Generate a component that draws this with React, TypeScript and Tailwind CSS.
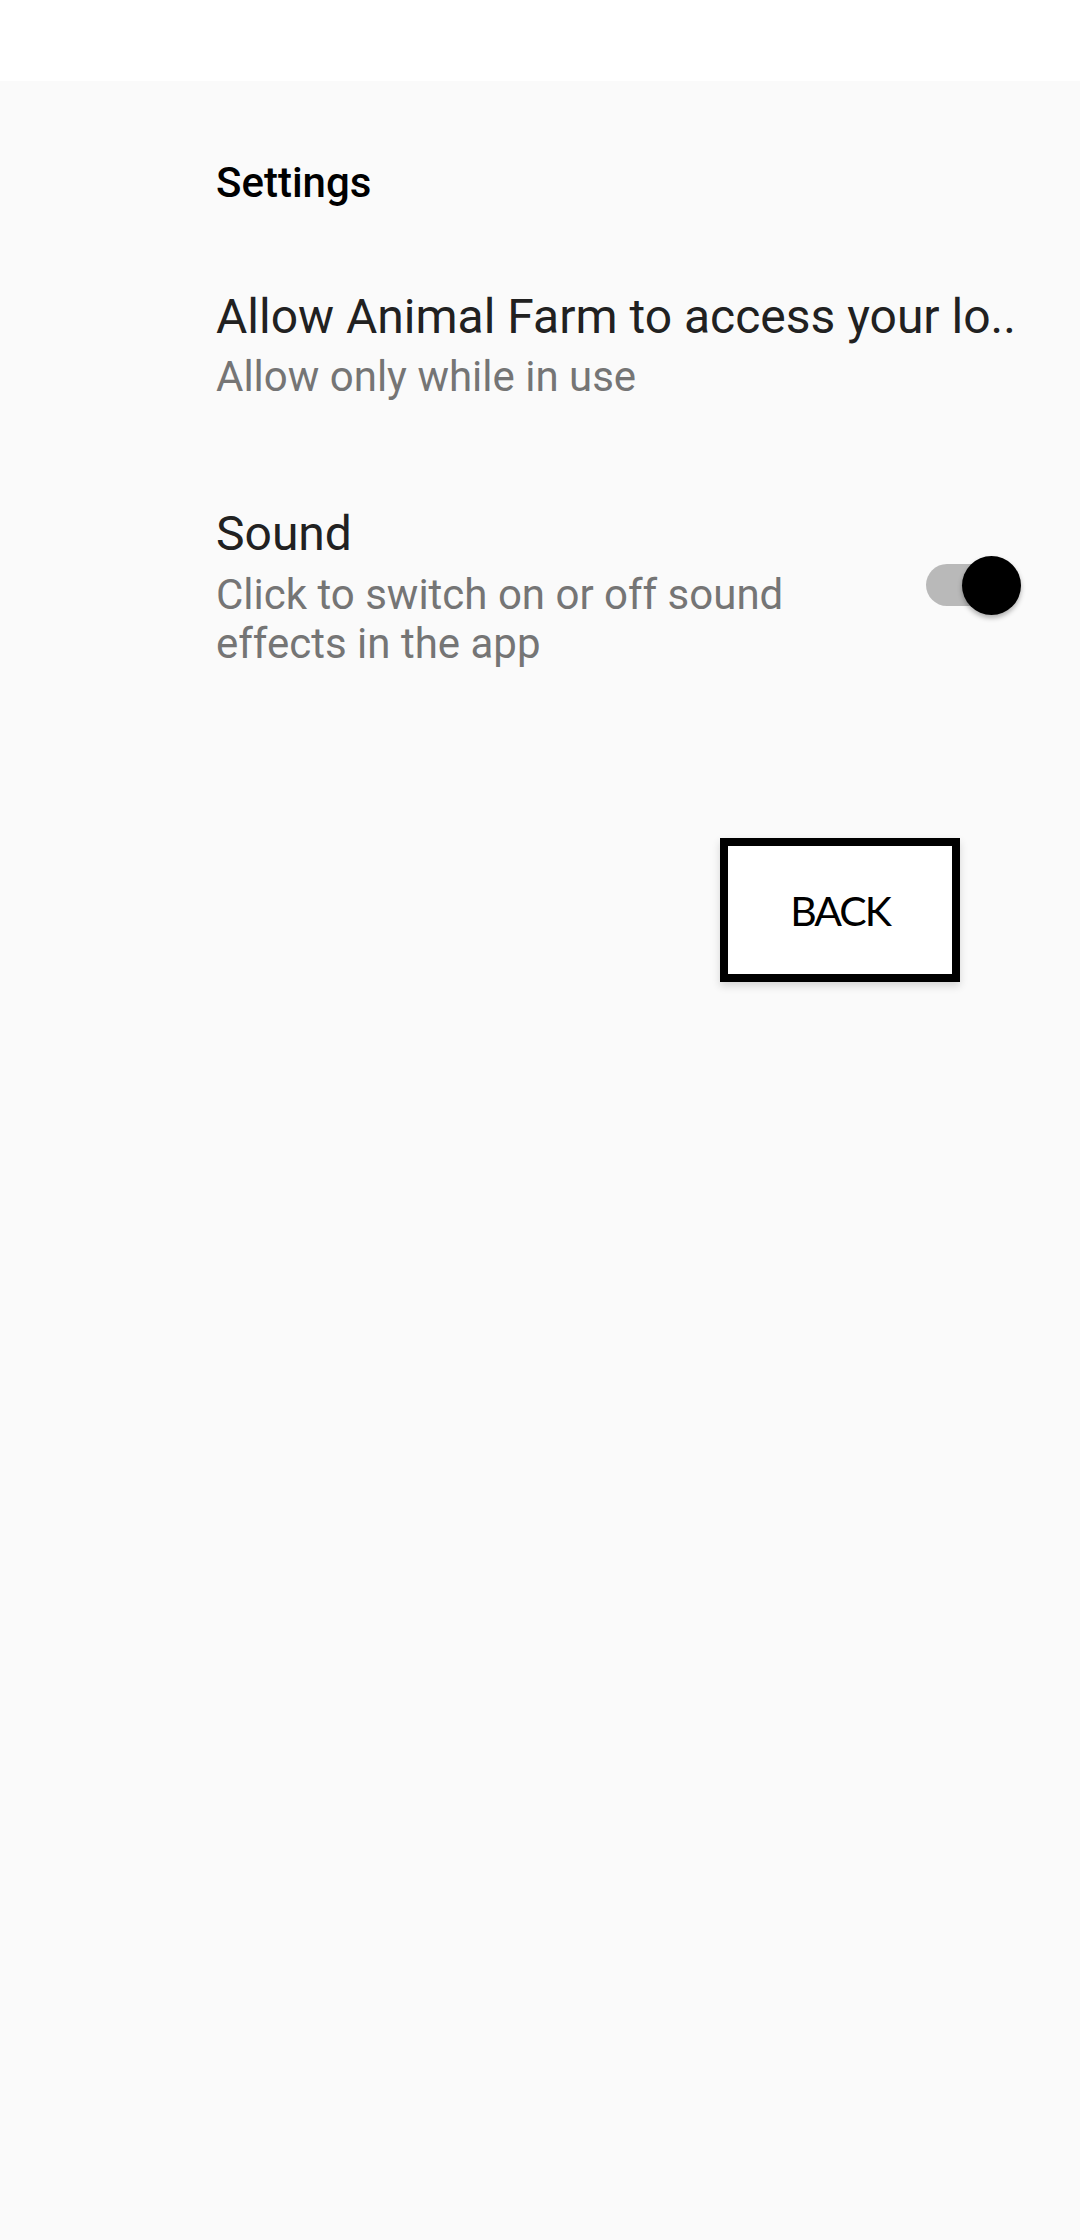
export default function App() {
  return (
    <div className="min-h-[2240px] w-full bg-[#fafafa] font-['Roboto',sans-serif]">
      {/* top bar */}
      <div className="h-[81px] bg-white" />

      <div className="pt-[78px]">
        <div className="pl-[216px] text-[42px] leading-[48px] font-medium text-black">
          Settings
        </div>

        {/* location row */}
        <div className="mt-[83px] pl-[216px] pr-[20px]">
          <div className="whitespace-nowrap text-[48px] leading-[54px] text-[#212121]">
            Allow Animal Farm to access your lo..
          </div>
          <div className="mt-[9px] text-[42px] leading-[48px] text-[#757575]">
            Allow only while in use
          </div>
        </div>

        {/* sound row */}
        <div className="mt-[106px] flex items-center pl-[216px] pr-[59px]">
          <div className="flex-1 pr-[40px]">
            <div className="text-[48px] leading-[54px] text-[#212121]">Sound</div>
            <div className="mt-[9px] text-[42px] leading-[49px] text-[#757575]">
              Click to switch on or off sound effects in the app
            </div>
          </div>
          <div className="relative mb-[5px] h-[59px] w-[95px] shrink-0">
            <div className="absolute left-0 top-[8.5px] h-[42px] w-[87px] rounded-full bg-[#b9b9b9]" />
            <div className="absolute right-0 top-0 h-[59px] w-[59px] rounded-full bg-black shadow-[0_3px_5px_rgba(0,0,0,0.3)]" />
          </div>
        </div>

        {/* back button */}
        <div className="mt-[170px] flex justify-end pr-[120px]">
          <button className="flex h-[144px] w-[240px] items-center justify-center border-[8px] border-black bg-white shadow-[0_4px_8px_rgba(0,0,0,0.15)]">
            <span className="font-['Lato',sans-serif] text-[41px] leading-none tracking-[-2px] text-black">
              BACK
            </span>
          </button>
        </div>
      </div>
    </div>
  );
}
